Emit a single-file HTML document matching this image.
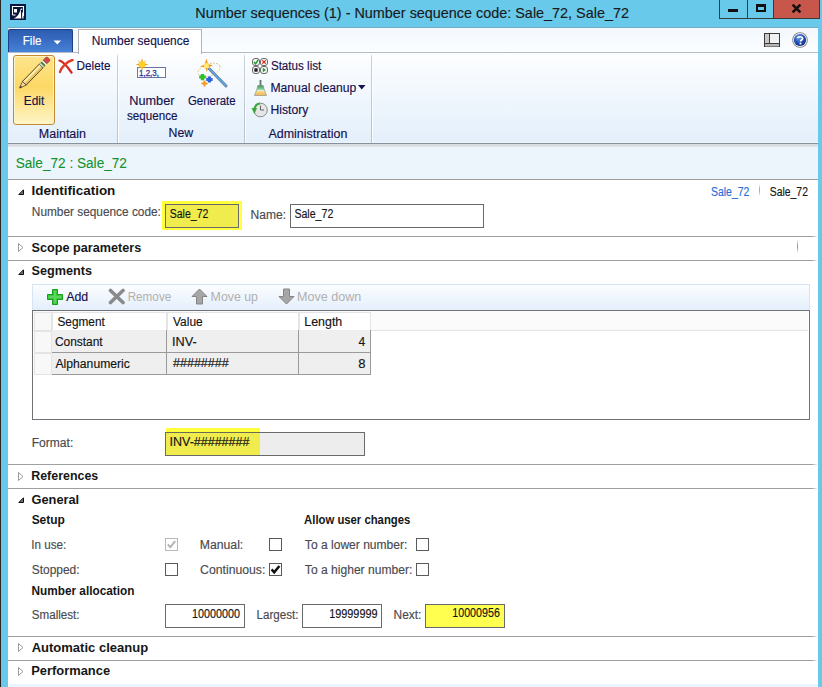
<!DOCTYPE html>
<html><head><meta charset="utf-8">
<style>
*{box-sizing:border-box;margin:0;padding:0}
html,body{width:822px;height:687px;overflow:hidden}
body{position:relative;background:#68c9ea;font-family:"Liberation Sans",sans-serif;font-size:12px}
.a{position:absolute}
#txt{position:absolute;left:0;top:0}
#txt text{font-family:"Liberation Sans",sans-serif}
</style></head><body>
<!-- left dark edge -->
<div class="a" style="left:0;top:0;width:1px;height:687px;background:#2a2525"></div>
<!-- app icon -->
<svg class="a" style="left:10px;top:4px" width="16" height="16">
<rect x="0" y="0" width="16" height="16" fill="#08163f"/>
<path d="M2.5 11 V2.5 H13.5 V12" fill="none" stroke="#fff" stroke-width="1.1"/>
<path d="M2.5 11 H5.5" stroke="#fff" stroke-width="1"/>
<rect x="4" y="5" width="3" height="3.5" fill="#fff"/>
<path d="M3.5 14.5 C7 13.5 9.5 10 10.8 4.5 L11.2 14.5Z" fill="#fff"/>
<rect x="12.2" y="8.5" width="1.3" height="6" fill="#fff"/>
<circle cx="11.5" cy="5.2" r="0.8" fill="#fff"/>
</svg>
<!-- window buttons -->
<div class="a" style="left:719px;top:0;width:29px;height:19px;border:1px solid #3a3a3a;border-top:none;background:#68c9ea"></div>
<div class="a" style="left:728px;top:9px;width:10px;height:3px;background:#111"></div>
<div class="a" style="left:747px;top:0;width:27px;height:19px;border:1px solid #3a3a3a;border-top:none;background:#68c9ea"></div>
<div class="a" style="left:756px;top:4px;width:10px;height:8px;border:2px solid #111;border-top-width:3px"></div>
<div class="a" style="left:773px;top:0;width:47px;height:19px;border:1px solid #3a3a3a;border-top:none;background:#c7574a"></div>
<svg class="a" style="left:791px;top:4px" width="11" height="9"><path d="M1.6 0.6 L9.4 8.4 M9.4 0.6 L1.6 8.4" stroke="#111" stroke-width="2.5"/></svg>

<!-- content panel -->
<div class="a" style="left:8px;top:28px;width:810px;height:659px;background:#fff"></div>
<!-- ribbon tab row -->
<div class="a" style="left:8px;top:28px;width:810px;height:25px;background:linear-gradient(#f3f8fd,#fbfdff);border-bottom:1px solid #b6bcc6"></div>
<div class="a" style="left:8px;top:27px;width:810px;height:1px;background:#70aac8"></div>
<div class="a" style="left:8px;top:28px;width:810px;height:1px;background:#f7fbff"></div>
<!-- ribbon body -->
<div class="a" style="left:8px;top:53px;width:810px;height:91px;background:linear-gradient(#fdfeff,#e3effb 98.8%,#eaf6fd 98.8%);border-bottom:1px solid #8a9099"></div>

<!-- File button -->
<div class="a" style="left:8px;top:29px;width:65px;height:23px;border:1px solid #1d3f8a;border-bottom:none;border-radius:2px 2px 0 0;background:linear-gradient(#2c5cb0,#3a70c6 55%,#4683d6)"></div>
<svg class="a" style="left:53px;top:40px" width="9" height="5"><path d="M0.5 0.5 L8 0.5 L4.25 4.5Z" fill="#fff"/></svg>
<!-- tab -->
<div class="a" style="left:78px;top:29px;width:124px;height:25px;border:1px solid #b0b4ba;border-bottom:none;background:#fff"></div>
<!-- layout icon -->
<svg class="a" style="left:764px;top:33px" width="16" height="14"><rect x="0.5" y="0.5" width="15" height="13" fill="#f2f2f2" stroke="#3c3c3c"/><rect x="1" y="1" width="4" height="10" fill="#c9c9c9"/><rect x="1" y="10.5" width="14" height="3" fill="#b5b5b5"/><line x1="5.5" y1="1" x2="5.5" y2="11" stroke="#3c3c3c"/><line x1="1" y1="10.5" x2="15" y2="10.5" stroke="#3c3c3c"/></svg>
<!-- help icon -->
<svg class="a" style="left:792px;top:32px" width="16" height="16"><defs><radialGradient id="hg" cx="0.4" cy="0.3" r="0.7"><stop offset="0" stop-color="#6f9de8"/><stop offset="0.6" stop-color="#1f4fb8"/><stop offset="1" stop-color="#0d2f86"/></radialGradient></defs><circle cx="8" cy="8" r="7.8" fill="#7e7e7e"/><circle cx="8" cy="8" r="7" fill="#e8e8e8"/><circle cx="8" cy="8" r="6.1" fill="url(#hg)"/><path d="M5.6 6.2 C5.6 4.3 10.6 4.1 10.6 6.4 C10.6 8 8.5 8 8.5 9.6" fill="none" stroke="#fff" stroke-width="1.7"/><rect x="7.6" y="10.6" width="1.8" height="1.8" fill="#fff"/></svg>

<!-- Edit button -->
<div class="a" style="left:13px;top:55px;width:42px;height:70px;border:1px solid #c48a30;border-radius:3px;box-shadow:inset 0 0 0 1px #fff3c8;background:linear-gradient(#fde48c,#fcd865 45%,#fef5c8)"></div>
<svg class="a" style="left:14px;top:52px" width="40" height="40">
<g transform="translate(20.1,21.2) rotate(-45.8)">
<path d="M-14 -2.6 H10 V2.6 H-14Z" fill="#f6dd86" stroke="#4d3d18" stroke-width="0.9"/>
<path d="M-14 -1.2 H10" stroke="#fff3c0" stroke-width="1"/>
<path d="M-14 1.3 H10" stroke="#d9b450" stroke-width="1"/>
<rect x="10" y="-2.6" width="2.2" height="5.2" fill="#d8d8d8" stroke="#4d3d18" stroke-width="0.5"/>
<rect x="12.2" y="-2.6" width="1.6" height="5.2" fill="#2f8a3a"/>
<rect x="13.8" y="-2.6" width="1.8" height="5.2" fill="#e8e8e8"/>
<path d="M15.6 -2.6 H19.5 Q20.8 -2.6 20.8 -1 V1 Q20.8 2.6 19.5 2.6 H15.6Z" fill="#cf4a4a" stroke="#6a2a2a" stroke-width="0.5"/>
<path d="M-14 -2.6 L-20.6 -0.2 L-20.6 0.2 L-14 2.6Z" fill="#f3d3a6" stroke="#4d3d18" stroke-width="0.7"/>
<path d="M-18.3 -0.9 L-21 0 L-18.3 0.9Z" fill="#2a2a2a"/>
</g></svg>
<!-- Delete icon -->
<svg class="a" style="left:58px;top:59px" width="16" height="15"><path d="M1.5 1.5 C5 2.5 9 7 13.5 13.5" fill="none" stroke="#d8261c" stroke-width="2.2" stroke-linecap="round"/><path d="M14.5 1 C9 2.5 3.5 8 2 13" fill="none" stroke="#e23a2a" stroke-width="2.4" stroke-linecap="round"/></svg>
<div class="a" style="left:117px;top:53px;width:1px;height:90px;background:linear-gradient(#fdfeff,#c9d0d8 5%,#b9c3ce)"></div><div class="a" style="left:118px;top:55px;width:1px;height:88px;background:#fbfdff"></div>
<!-- Number sequence icon -->
<svg class="a" style="left:134px;top:57px" width="34" height="22">
<rect x="3.5" y="10.5" width="28" height="10" fill="#fff" stroke="#6c74a6"/>
<text x="5" y="19.3" font-family="Liberation Sans" font-size="9" fill="#2a3ea0" stroke="#2a3ea0" stroke-width="0.3" textLength="20" lengthAdjust="spacingAndGlyphs">1,2,3,</text>
<g transform="translate(8,7.5)">
<path d="M0 -6.5 L1.2 -2 L4.6 -4.6 L2 -1.2 L6.5 0 L2 1.2 L4.6 4.6 L1.2 2 L0 6.5 L-1.2 2 L-4.6 4.6 L-2 1.2 L-6.5 0 L-2 -1.2 L-4.6 -4.6 L-1.2 -2Z" fill="#eb9a1c"/>
<circle r="3.3" fill="#ffd020"/>
</g></svg>
<!-- Generate icon -->
<svg class="a" style="left:196px;top:57px" width="34" height="32">
<ellipse cx="13" cy="13" rx="11.5" ry="6" transform="rotate(-20 13 13)" fill="none" stroke="#d9b36a" stroke-width="0.9" stroke-dasharray="1.5 1.5"/>
<line x1="13.5" y1="12" x2="30" y2="29" stroke="#6a7e96" stroke-width="3" stroke-linecap="round"/>
<line x1="13.5" y1="12" x2="30" y2="29" stroke="#5aa8ec" stroke-width="1.6" stroke-linecap="round"/>
<path d="M10.5 1.5 L12 7 L17 8.5 L12 10.5 L11 15 L9 10.5 L4 9.5 L8.5 7.5Z" fill="#f39a1a"/>
<circle cx="10.3" cy="8.7" r="2.6" fill="#ffe870"/>
<path d="M4.8 17 h3.4 v1.6 h1.6 v3 h-1.6 v1.6 h-3.4 v-1.6 h-1.6 v-3 h1.6z" fill="#2fc02a"/>
<path d="M11.8 19.6 h3.2 v1.5 h1.6 v2.8 h-1.6 v1.5 h-3.2 v-1.5 h-1.6 v-2.8 h1.6z" fill="#2a62e0"/>
<path d="M7.5 23.5 h2 v2 h2 v2 h-2 v2 h-2 v-2 h-2 v-2 h2z" fill="#f39a1a"/>
</svg>
<div class="a" style="left:244px;top:53px;width:1px;height:90px;background:linear-gradient(#fdfeff,#c9d0d8 5%,#b9c3ce)"></div><div class="a" style="left:245px;top:55px;width:1px;height:88px;background:#fbfdff"></div>
<!-- Status list icon -->
<svg class="a" style="left:252px;top:58px" width="16" height="16">
<rect x="0.5" y="0.5" width="7" height="7" rx="2.5" fill="#f4f4f4" stroke="#6a6a6a"/><path d="M2 4 L3.6 5.8 L6.2 1.8" fill="none" stroke="#1f9a2a" stroke-width="1.5"/>
<rect x="8.5" y="0.5" width="7" height="7" rx="2.5" fill="#f4f4f4" stroke="#6a6a6a"/><path d="M10.3 2.3 L13.7 5.7 M13.7 2.3 L10.3 5.7" stroke="#e02020" stroke-width="1.2"/>
<rect x="0.5" y="8.5" width="7" height="7" rx="2.5" fill="#f4f4f4" stroke="#6a6a6a"/><rect x="2.3" y="10.3" width="3.4" height="3.4" rx="0.6" fill="#222"/>
<rect x="8.5" y="8.5" width="7" height="7" rx="2.5" fill="#f4f4f4" stroke="#6a6a6a"/><path d="M10.8 9.8 L14 12 L10.8 14.2Z" fill="#1f9a2a"/>
</svg>
<!-- broom -->
<svg class="a" style="left:254px;top:80px" width="13" height="16">
<defs><linearGradient id="bg1" x1="0" y1="0" x2="0" y2="1"><stop offset="0" stop-color="#3f9a5a"/><stop offset="0.35" stop-color="#7ccf98"/><stop offset="0.5" stop-color="#d6f0d8"/><stop offset="0.56" stop-color="#f8dc8a"/><stop offset="1" stop-color="#f2b45a"/></linearGradient></defs>
<rect x="5.6" y="0" width="1.8" height="6" fill="#5a7a6a"/>
<path d="M3.8 5.5 L9.2 5.5 L10 9 L12.5 15.5 L0.5 15.5 L3 9Z" fill="url(#bg1)" stroke="#8a8a7a" stroke-width="0.6"/>
</svg>
<svg class="a" style="left:358px;top:85px" width="8" height="5"><path d="M0 0 L7.5 0 L3.75 4.5Z" fill="#15104e"/></svg>
<!-- history -->
<svg class="a" style="left:251px;top:102px" width="17" height="16">
<circle cx="9.5" cy="8" r="6.8" fill="#e6e6e6" stroke="#8a8a8a"/>
<path d="M9.5 3.5 L9.5 8 L13 8" fill="none" stroke="#666" stroke-width="1"/>
<path d="M0.5 6 L6 6 L3.5 12Z" fill="#3aa83a"/>
<path d="M3.5 8 C3.5 4 6 2 9 1.6" fill="none" stroke="#3aa83a" stroke-width="2"/>
</svg>
<div class="a" style="left:371px;top:53px;width:1px;height:90px;background:linear-gradient(#fdfeff,#c9d0d8 5%,#b9c3ce)"></div><div class="a" style="left:372px;top:55px;width:1px;height:88px;background:#fbfdff"></div>

<!-- header -->
<div class="a" style="left:8px;top:144px;width:810px;height:36px;background:linear-gradient(#d9dadf,#dcdde1 2px,#e6ebf0 3px,#edf5fc 3px);border-bottom:1px solid #9c9c9c"></div>

<!-- FastTab separators -->
<div class="a" style="left:8px;top:236px;width:810px;height:1px;background:linear-gradient(90deg,#a0a0a0 0,#a0a0a0 804px,#fff 810px)"></div>
<div class="a" style="left:8px;top:260px;width:810px;height:1px;background:linear-gradient(90deg,#a0a0a0 0,#a0a0a0 804px,#fff 810px)"></div>
<div class="a" style="left:8px;top:464px;width:810px;height:1px;background:linear-gradient(90deg,#a0a0a0 0,#a0a0a0 804px,#fff 810px)"></div>
<div class="a" style="left:8px;top:488px;width:810px;height:1px;background:linear-gradient(90deg,#a0a0a0 0,#a0a0a0 804px,#fff 810px)"></div>
<div class="a" style="left:8px;top:636px;width:810px;height:1px;background:linear-gradient(90deg,#a0a0a0 0,#a0a0a0 804px,#fff 810px)"></div>
<div class="a" style="left:8px;top:660px;width:810px;height:1px;background:linear-gradient(90deg,#a0a0a0 0,#a0a0a0 804px,#fff 810px)"></div>
<!-- triangles: expanded -->
<svg class="a" style="left:18px;top:189px" width="7" height="7"><path d="M5.5 0.8 L5.5 5.5 L0.8 5.5Z" fill="#707070" stroke="#111" stroke-width="1" stroke-linejoin="round"/></svg>
<svg class="a" style="left:18px;top:269px" width="7" height="7"><path d="M5.5 0.8 L5.5 5.5 L0.8 5.5Z" fill="#707070" stroke="#111" stroke-width="1" stroke-linejoin="round"/></svg>
<svg class="a" style="left:18px;top:497px" width="7" height="7"><path d="M5.5 0.8 L5.5 5.5 L0.8 5.5Z" fill="#707070" stroke="#111" stroke-width="1" stroke-linejoin="round"/></svg>
<!-- collapsed -->
<svg class="a" style="left:17px;top:242px" width="8" height="11"><path d="M1.5 1.5 L6 5.5 L1.5 9.5Z" fill="none" stroke="#9a9a9a"/></svg>
<svg class="a" style="left:17px;top:471px" width="8" height="11"><path d="M1.5 1.5 L6 5.5 L1.5 9.5Z" fill="none" stroke="#9a9a9a"/></svg>
<svg class="a" style="left:17px;top:642px" width="8" height="11"><path d="M1.5 1.5 L6 5.5 L1.5 9.5Z" fill="none" stroke="#9a9a9a"/></svg>
<svg class="a" style="left:17px;top:666px" width="8" height="11"><path d="M1.5 1.5 L6 5.5 L1.5 9.5Z" fill="none" stroke="#9a9a9a"/></svg>
<!-- scope tick -->
<div class="a" style="left:797px;top:240px;width:1px;height:13px;background:linear-gradient(#fff,#999 40%,#999 60%,#fff)"></div>
<div class="a" style="left:759px;top:184px;width:1px;height:12px;background:linear-gradient(#fff,#aaa 40%,#aaa 60%,#fff)"></div>

<!-- Identification fields -->
<div class="a" style="left:162px;top:201px;width:80px;height:29px;background:#ffff3c"></div>
<div class="a" style="left:165px;top:204px;width:74px;height:24px;border:1px solid #6a6a6a;background:#f0ec4e"></div>
<div class="a" style="left:290px;top:204px;width:194px;height:24px;border:1px solid #6a6a6a;background:#fff"></div>

<!-- Segments toolbar -->
<div class="a" style="left:32px;top:284px;width:778px;height:27px;border:1px solid #d6e4f3;border-bottom:none;background:linear-gradient(#fbfdff,#e3eefb)"></div>
<svg class="a" style="left:46px;top:288px" width="18" height="18">
<path d="M6.5 1.5 h5 v5 h5 v5 h-5 v5 h-5 v-5 h-5 v-5 h5z" fill="#3cc83c" stroke="#1a9a1a" stroke-width="1"/>
<path d="M8 3 h2 v5 h5 v2 h-5 v5 h-2 v-5 h-5 v-2 h5z" fill="#7ee07a" opacity="0.5"/>
</svg>
<svg class="a" style="left:108px;top:288px" width="18" height="17"><path d="M2.5 2.5 L15 14.5 M15 2.5 L2.5 14.5" stroke="#8a8a8a" stroke-width="3.6" stroke-linecap="round"/></svg>
<svg class="a" style="left:191px;top:288px" width="17" height="17"><path d="M8.5 1 L16 8.5 L11.5 8.5 L11.5 16 L5.5 16 L5.5 8.5 L1 8.5Z" fill="#a6a6a6" stroke="#858585" stroke-width="1"/></svg>
<svg class="a" style="left:278px;top:288px" width="17" height="17"><path d="M8.5 16 L16 8.5 L11.5 8.5 L11.5 1 L5.5 1 L5.5 8.5 L1 8.5Z" fill="#a6a6a6" stroke="#858585" stroke-width="1"/></svg>

<!-- grid -->
<div class="a" style="left:32px;top:310px;width:778px;height:110px;border:1px solid #6f7378;background:#fff"></div>
<div class="a" style="left:33px;top:311px;width:775px;height:20px;background:#fbfbfb;border-bottom:1px solid #e2e2e2"></div>
<!-- header cells -->
<div class="a" style="left:34px;top:312px;width:18px;height:19px;border:1px solid #e4e4e4;background:#f8f8f8"></div>
<div class="a" style="left:52px;top:312px;width:115px;height:19px;border:1px solid #e4e4e4;background:#fff"></div>
<div class="a" style="left:167px;top:312px;width:132px;height:19px;border:1px solid #e4e4e4;background:#fff"></div>
<div class="a" style="left:299px;top:312px;width:72px;height:19px;border:1px solid #e4e4e4;background:#fff"></div>
<!-- row headers -->
<div class="a" style="left:34px;top:331px;width:18px;height:22px;border:1px solid #e4e4e4;background:#f8f8f8"></div>
<div class="a" style="left:34px;top:353px;width:18px;height:22px;border:1px solid #e4e4e4;background:#f8f8f8"></div>
<!-- data cells -->
<div class="a" style="left:52px;top:330px;width:319px;height:45px;background:#efefef;border-right:1px solid #9a9a9a;border-bottom:1px solid #9a9a9a"></div>
<div class="a" style="left:52px;top:352px;width:319px;height:1px;background:#9a9a9a"></div>
<div class="a" style="left:166px;top:330px;width:1px;height:45px;background:#9a9a9a"></div>
<div class="a" style="left:298px;top:330px;width:1px;height:45px;background:#9a9a9a"></div>

<!-- Format field -->
<div class="a" style="left:165px;top:432px;width:200px;height:24px;border:1px solid #6a6a6a;background:#ededed"></div>
<div class="a" style="left:166px;top:428px;width:94px;height:27px;background:#f0ec4e"></div>
<div class="a" style="left:166px;top:428px;width:94px;height:4px;background:#ffff3c"></div>
<div class="a" style="left:166px;top:432px;width:94px;height:1px;background:#6a6a5a"></div>
<div class="a" style="left:165px;top:455px;width:200px;height:1px;background:#6a6a6a"></div>

<!-- checkboxes -->
<div class="a" style="left:165px;top:538px;width:13px;height:13px;border:1px solid #b8b8b8;background:#fff"></div>
<svg class="a" style="left:165px;top:538px" width="13" height="13"><path d="M2.8 6.4 L5.3 9.2 L10.2 3.2" fill="none" stroke="#b4b4b4" stroke-width="2"/></svg>
<div class="a" style="left:165px;top:563px;width:13px;height:13px;border:1px solid #5a5a5a;background:#fff"></div>
<div class="a" style="left:269px;top:538px;width:13px;height:13px;border:1px solid #5a5a5a;background:#fff"></div>
<div class="a" style="left:269px;top:563px;width:13px;height:13px;border:1px solid #5a5a5a;background:#fff"></div>
<svg class="a" style="left:269px;top:563px" width="13" height="13"><path d="M2.6 6.4 L5.2 9.4 L10.4 3" fill="none" stroke="#111" stroke-width="2.5"/></svg>
<div class="a" style="left:416px;top:538px;width:13px;height:13px;border:1px solid #5a5a5a;background:#fff"></div>
<div class="a" style="left:416px;top:563px;width:13px;height:13px;border:1px solid #5a5a5a;background:#fff"></div>

<!-- number fields -->
<div class="a" style="left:165px;top:604px;width:80px;height:24px;border:1px solid #6a6a6a;background:#fff"></div>
<div class="a" style="left:302px;top:604px;width:80px;height:24px;border:1px solid #6a6a6a;background:#fff"></div>
<div class="a" style="left:425px;top:604px;width:80px;height:24px;border:1px solid #6a6a6a;background:#ffff50"></div>

<!-- bottom bluish strip -->
<div class="a" style="left:9px;top:684px;width:808px;height:3px;background:#eaf4fc"></div>

<svg id="txt" width="822" height="687" viewBox="0 0 822 687">
<text x="195.25" y="17.70" font-size="15" font-weight="normal" fill="#1a1a1a" stroke="#1a1a1a" stroke-width="0.15" textLength="433.67" lengthAdjust="spacingAndGlyphs">Number sequences (1) - Number sequence code: Sale_72, Sale_72</text>
<text x="22.77" y="44.60" font-size="12" font-weight="normal" fill="#ffffff" stroke="#ffffff" stroke-width="0.15" textLength="18.71" lengthAdjust="spacingAndGlyphs">File</text>
<text x="91.85" y="44.90" font-size="12" font-weight="normal" fill="#15104e" stroke="#15104e" stroke-width="0.15" textLength="97.45" lengthAdjust="spacingAndGlyphs">Number sequence</text>
<text x="76.56" y="69.90" font-size="12" font-weight="normal" fill="#15104e" stroke="#15104e" stroke-width="0.15" textLength="33.92" lengthAdjust="spacingAndGlyphs">Delete</text>
<text x="23.75" y="104.70" font-size="12" font-weight="normal" fill="#15104e" stroke="#15104e" stroke-width="0.15" textLength="20.45" lengthAdjust="spacingAndGlyphs">Edit</text>
<text x="38.80" y="137.50" font-size="12" font-weight="normal" fill="#15104e" stroke="#15104e" stroke-width="0.15" textLength="47.25" lengthAdjust="spacingAndGlyphs">Maintain</text>
<text x="129.28" y="104.80" font-size="12" font-weight="normal" fill="#15104e" stroke="#15104e" stroke-width="0.15" textLength="45.17" lengthAdjust="spacingAndGlyphs">Number</text>
<text x="127.01" y="119.50" font-size="12" font-weight="normal" fill="#15104e" stroke="#15104e" stroke-width="0.15" textLength="50.48" lengthAdjust="spacingAndGlyphs">sequence</text>
<text x="187.93" y="104.80" font-size="12" font-weight="normal" fill="#15104e" stroke="#15104e" stroke-width="0.15" textLength="47.72" lengthAdjust="spacingAndGlyphs">Generate</text>
<text x="168.62" y="137.20" font-size="12" font-weight="normal" fill="#15104e" stroke="#15104e" stroke-width="0.15" textLength="24.63" lengthAdjust="spacingAndGlyphs">New</text>
<text x="270.88" y="69.80" font-size="12" font-weight="normal" fill="#15104e" stroke="#15104e" stroke-width="0.15" textLength="50.44" lengthAdjust="spacingAndGlyphs">Status list</text>
<text x="270.43" y="91.70" font-size="12" font-weight="normal" fill="#15104e" stroke="#15104e" stroke-width="0.15" textLength="85.97" lengthAdjust="spacingAndGlyphs">Manual cleanup</text>
<text x="270.43" y="113.60" font-size="12" font-weight="normal" fill="#15104e" stroke="#15104e" stroke-width="0.15" textLength="37.89" lengthAdjust="spacingAndGlyphs">History</text>
<text x="268.50" y="137.80" font-size="12" font-weight="normal" fill="#15104e" stroke="#15104e" stroke-width="0.15" textLength="78.86" lengthAdjust="spacingAndGlyphs">Administration</text>
<text x="15.69" y="167.80" font-size="15.4" font-weight="normal" fill="#12922c" stroke="#12922c" stroke-width="0.1" textLength="111.24" lengthAdjust="spacingAndGlyphs">Sale_72 : Sale_72</text>
<text x="31.52" y="195.00" font-size="13.5" font-weight="bold" fill="#161616" textLength="83.82" lengthAdjust="spacingAndGlyphs">Identification</text>
<text x="31.85" y="216.00" font-size="12" font-weight="normal" fill="#4a4a4e" stroke="#4a4a4e" stroke-width="0.15" textLength="129.06" lengthAdjust="spacingAndGlyphs">Number sequence code:</text>
<text x="169.73" y="217.90" font-size="12" font-weight="normal" fill="#141414" stroke="#141414" stroke-width="0.15" textLength="38.70" lengthAdjust="spacingAndGlyphs">Sale_72</text>
<text x="250.64" y="218.60" font-size="12" font-weight="normal" fill="#4a4a4e" stroke="#4a4a4e" stroke-width="0.15" textLength="35.49" lengthAdjust="spacingAndGlyphs">Name:</text>
<text x="294.42" y="217.90" font-size="12" font-weight="normal" fill="#141414" stroke="#141414" stroke-width="0.15" textLength="38.91" lengthAdjust="spacingAndGlyphs">Sale_72</text>
<text x="710.93" y="195.80" font-size="12" font-weight="normal" fill="#2b6fd6" stroke="#2b6fd6" stroke-width="0.15" textLength="38.50" lengthAdjust="spacingAndGlyphs">Sale_72</text>
<text x="769.83" y="195.80" font-size="12" font-weight="normal" fill="#141414" stroke="#141414" stroke-width="0.15" textLength="38.09" lengthAdjust="spacingAndGlyphs">Sale_72</text>
<text x="31.62" y="251.80" font-size="12.8" font-weight="bold" fill="#161616" textLength="109.70" lengthAdjust="spacingAndGlyphs">Scope parameters</text>
<text x="31.62" y="275.30" font-size="12.8" font-weight="bold" fill="#161616" textLength="60.48" lengthAdjust="spacingAndGlyphs">Segments</text>
<text x="66.20" y="300.80" font-size="12" font-weight="normal" fill="#15104e" stroke="#15104e" stroke-width="0.15" textLength="21.93" lengthAdjust="spacingAndGlyphs">Add</text>
<text x="127.66" y="300.80" font-size="12" font-weight="normal" fill="#b0b0b0" textLength="43.59" lengthAdjust="spacingAndGlyphs">Remove</text>
<text x="210.61" y="300.80" font-size="12" font-weight="normal" fill="#b0b0b0" textLength="47.39" lengthAdjust="spacingAndGlyphs">Move up</text>
<text x="296.99" y="300.80" font-size="12" font-weight="normal" fill="#b0b0b0" textLength="64.25" lengthAdjust="spacingAndGlyphs">Move down</text>
<text x="57.47" y="326.30" font-size="12" font-weight="normal" fill="#141414" stroke="#141414" stroke-width="0.15" textLength="47.32" lengthAdjust="spacingAndGlyphs">Segment</text>
<text x="173.04" y="325.70" font-size="12" font-weight="normal" fill="#141414" stroke="#141414" stroke-width="0.15" textLength="29.68" lengthAdjust="spacingAndGlyphs">Value</text>
<text x="304.31" y="325.70" font-size="12" font-weight="normal" fill="#141414" stroke="#141414" stroke-width="0.15" textLength="37.92" lengthAdjust="spacingAndGlyphs">Length</text>
<text x="54.90" y="345.90" font-size="12" font-weight="normal" fill="#141414" stroke="#141414" stroke-width="0.15" textLength="47.79" lengthAdjust="spacingAndGlyphs">Constant</text>
<text x="171.96" y="345.70" font-size="12" font-weight="normal" fill="#141414" stroke="#141414" stroke-width="0.15" textLength="24.71" lengthAdjust="spacingAndGlyphs">INV-</text>
<text x="358.56" y="345.80" font-size="12" font-weight="normal" fill="#141414" stroke="#141414" stroke-width="0.15" textLength="6.76" lengthAdjust="spacingAndGlyphs">4</text>
<text x="55.50" y="367.80" font-size="12" font-weight="normal" fill="#141414" stroke="#141414" stroke-width="0.15" textLength="74.40" lengthAdjust="spacingAndGlyphs">Alphanumeric</text>
<text x="172.94" y="367.00" font-size="12" font-weight="normal" fill="#141414" stroke="#141414" stroke-width="0.15" textLength="55.85" lengthAdjust="spacingAndGlyphs">########</text>
<text x="358.28" y="367.70" font-size="12" font-weight="normal" fill="#141414" stroke="#141414" stroke-width="0.15" textLength="7.26" lengthAdjust="spacingAndGlyphs">8</text>
<text x="31.74" y="446.80" font-size="12" font-weight="normal" fill="#4a4a4e" stroke="#4a4a4e" stroke-width="0.15" textLength="41.55" lengthAdjust="spacingAndGlyphs">Format:</text>
<text x="169.58" y="445.70" font-size="12" font-weight="normal" fill="#141414" stroke="#141414" stroke-width="0.15" textLength="79.81" lengthAdjust="spacingAndGlyphs">INV-########</text>
<text x="31.19" y="479.70" font-size="12.8" font-weight="bold" fill="#161616" textLength="67.03" lengthAdjust="spacingAndGlyphs">References</text>
<text x="31.49" y="503.80" font-size="12.8" font-weight="bold" fill="#161616" textLength="47.70" lengthAdjust="spacingAndGlyphs">General</text>
<text x="31.64" y="524.10" font-size="12" font-weight="bold" fill="#161616" textLength="33.27" lengthAdjust="spacingAndGlyphs">Setup</text>
<text x="304.12" y="523.90" font-size="12" font-weight="bold" fill="#161616" textLength="106.15" lengthAdjust="spacingAndGlyphs">Allow user changes</text>
<text x="31.25" y="549.00" font-size="12" font-weight="normal" fill="#4a4a4e" stroke="#4a4a4e" stroke-width="0.15" textLength="35.07" lengthAdjust="spacingAndGlyphs">In use:</text>
<text x="199.72" y="548.70" font-size="12" font-weight="normal" fill="#4a4a4e" stroke="#4a4a4e" stroke-width="0.15" textLength="43.55" lengthAdjust="spacingAndGlyphs">Manual:</text>
<text x="304.86" y="549.10" font-size="12" font-weight="normal" fill="#4a4a4e" stroke="#4a4a4e" stroke-width="0.15" textLength="102.52" lengthAdjust="spacingAndGlyphs">To a lower number:</text>
<text x="31.76" y="574.10" font-size="12" font-weight="normal" fill="#4a4a4e" stroke="#4a4a4e" stroke-width="0.15" textLength="47.79" lengthAdjust="spacingAndGlyphs">Stopped:</text>
<text x="200.09" y="573.90" font-size="12" font-weight="normal" fill="#4a4a4e" stroke="#4a4a4e" stroke-width="0.15" textLength="65.28" lengthAdjust="spacingAndGlyphs">Continuous:</text>
<text x="304.86" y="574.00" font-size="12" font-weight="normal" fill="#4a4a4e" stroke="#4a4a4e" stroke-width="0.15" textLength="107.42" lengthAdjust="spacingAndGlyphs">To a higher number:</text>
<text x="31.53" y="595.10" font-size="12" font-weight="bold" fill="#161616" textLength="102.86" lengthAdjust="spacingAndGlyphs">Number allocation</text>
<text x="31.78" y="619.00" font-size="12" font-weight="normal" fill="#4a4a4e" stroke="#4a4a4e" stroke-width="0.15" textLength="47.74" lengthAdjust="spacingAndGlyphs">Smallest:</text>
<text x="192.09" y="617.60" font-size="12" font-weight="normal" fill="#141414" stroke="#141414" stroke-width="0.15" textLength="47.98" lengthAdjust="spacingAndGlyphs">10000000</text>
<text x="256.57" y="618.70" font-size="12" font-weight="normal" fill="#4a4a4e" stroke="#4a4a4e" stroke-width="0.15" textLength="41.85" lengthAdjust="spacingAndGlyphs">Largest:</text>
<text x="329.19" y="617.60" font-size="12" font-weight="normal" fill="#141414" stroke="#141414" stroke-width="0.15" textLength="48.30" lengthAdjust="spacingAndGlyphs">19999999</text>
<text x="393.55" y="618.70" font-size="12" font-weight="normal" fill="#4a4a4e" stroke="#4a4a4e" stroke-width="0.15" textLength="27.81" lengthAdjust="spacingAndGlyphs">Next:</text>
<text x="452.30" y="617.40" font-size="12" font-weight="normal" fill="#141414" stroke="#141414" stroke-width="0.15" textLength="47.52" lengthAdjust="spacingAndGlyphs">10000956</text>
<text x="31.67" y="651.80" font-size="12.8" font-weight="bold" fill="#161616" textLength="116.46" lengthAdjust="spacingAndGlyphs">Automatic cleanup</text>
<text x="31.16" y="675.30" font-size="12.8" font-weight="bold" fill="#161616" textLength="78.91" lengthAdjust="spacingAndGlyphs">Performance</text>
</svg>
</body></html>
